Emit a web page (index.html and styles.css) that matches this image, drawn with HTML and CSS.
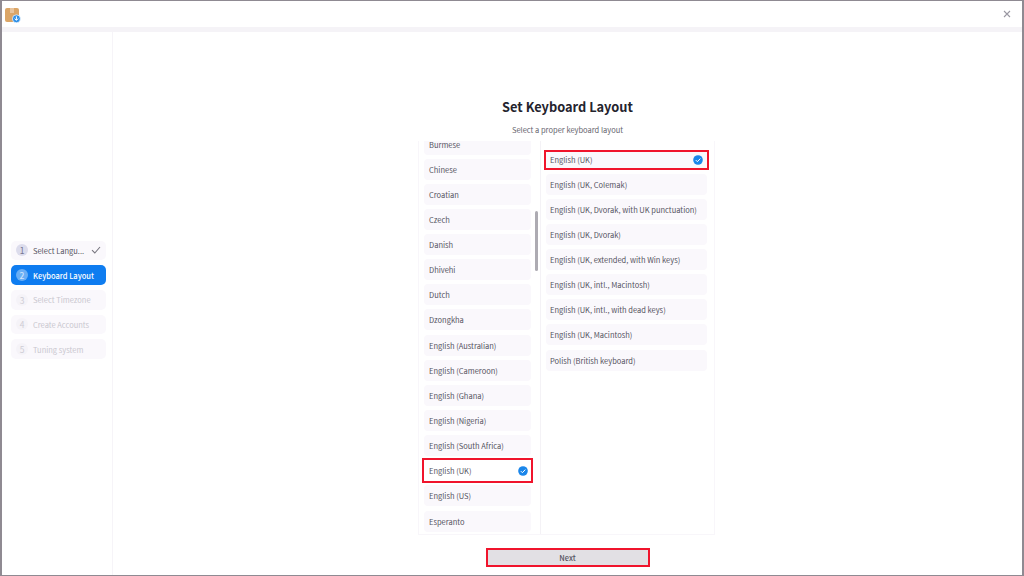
FILE: index.html
```html
<!DOCTYPE html>
<html lang="en">
<head>
<meta charset="utf-8">
<title>Set Keyboard Layout</title>
<link rel="stylesheet" href="styles.css">
</head>
<body>
<div class="window">
  <header class="titlebar">
    <svg class="logo" width="16" height="15" viewBox="0 0 16 15">
      <rect x="0" y="0" width="14" height="14" rx="2" fill="#dba566"/>
      <rect x="5" y="0" width="4" height="5" fill="#e8c49c"/>
      <circle cx="11.4" cy="10.8" r="4" fill="#2e8fe6" stroke="#fff" stroke-width="0.7"/>
      <path d="M11.4 8.4v3.6M9.7 10.6l1.7 1.8 1.7-1.8" fill="none" stroke="#fff" stroke-width="1"/>
    </svg>
    <svg class="close" width="8" height="8" viewBox="0 0 8 8">
      <path d="M1 1l6 6M7 1l-6 6" stroke="#9a98a2" stroke-width="1.1"/>
    </svg>
  </header>
  <div class="band"></div>
  <div class="body">
    <nav class="sidebar">
      <div class="step done"><span class="num">1</span><span class="label">Select Langu...</span>
        <svg class="tick" width="10" height="8" viewBox="0 0 10 8"><path d="M1 4.2l2.8 2.8L9 1" fill="none" stroke="#77757f" stroke-width="1.1"/></svg>
      </div>
      <div class="step active"><span class="num">2</span><span class="label">Keyboard Layout</span></div>
      <div class="step off"><span class="num">3</span><span class="label">Select Timezone</span></div>
      <div class="step off"><span class="num">4</span><span class="label">Create Accounts</span></div>
      <div class="step off"><span class="num">5</span><span class="label">Tuning system</span></div>
    </nav>
    <main class="main">
      <h1 class="title">Set Keyboard Layout</h1>
      <p class="subtitle">Select a proper keyboard layout</p>
      <div class="panes">
        <div class="pane pane-left">
          <div class="scrollbar"></div>
          <ul class="list list-left">
            <li class="item">Burmese</li>
            <li class="item">Chinese</li>
            <li class="item">Croatian</li>
            <li class="item">Czech</li>
            <li class="item">Danish</li>
            <li class="item">Dhivehi</li>
            <li class="item">Dutch</li>
            <li class="item">Dzongkha</li>
            <li class="item">English (Australian)</li>
            <li class="item">English (Cameroon)</li>
            <li class="item">English (Ghana)</li>
            <li class="item">English (Nigeria)</li>
            <li class="item">English (South Africa)</li>
            <li class="item selected">English (UK)
              <svg class="check" width="10" height="10" viewBox="0 0 10 10"><circle cx="5" cy="5" r="4.8" fill="#1a86ea"/><path d="M2.8 5.1l1.6 1.6 2.9-3.1" fill="none" stroke="#fff" stroke-width="1"/></svg>
            </li>
            <li class="item">English (US)</li>
            <li class="item">Esperanto</li>
          </ul>
        </div>
        <div class="pane pane-right">
          <ul class="list list-right">
            <li class="item selected">English (UK)
              <svg class="check" width="10" height="10" viewBox="0 0 10 10"><circle cx="5" cy="5" r="4.8" fill="#1a86ea"/><path d="M2.8 5.1l1.6 1.6 2.9-3.1" fill="none" stroke="#fff" stroke-width="1"/></svg>
            </li>
            <li class="item">English (UK, Colemak)</li>
            <li class="item">English (UK, Dvorak, with UK punctuation)</li>
            <li class="item">English (UK, Dvorak)</li>
            <li class="item">English (UK, extended, with Win keys)</li>
            <li class="item">English (UK, intl., Macintosh)</li>
            <li class="item">English (UK, intl., with dead keys)</li>
            <li class="item">English (UK, Macintosh)</li>
            <li class="item">Polish (British keyboard)</li>
          </ul>
        </div>
      </div>
      <button class="next" type="button">Next</button>
    </main>
  </div>
</div>
</body>
</html>
```
FILE: styles.css
```css
* { box-sizing: border-box; }
html, body { margin: 0; height: 100%; }
body {
  width: 1024px;
  height: 576px;
  overflow: hidden;
  background: #fff;
  font-family: "Noto Sans CJK SC", "Noto Sans", sans-serif;
  color: #55535f;
}
.window {
  display: flex;
  flex-direction: column;
  height: 576px;
  border-style: solid;
  border-color: #8f8a92;
  border-width: 1px 2px 1px 2px;
}
.titlebar {
  display: flex;
  align-items: center;
  justify-content: space-between;
  flex: none;
  height: 26px;
  padding: 0 11px 0 3px;
  background: #fff;
}
.logo { margin-top: 3px; }
.band { flex: none; height: 5px; background: #f5f3f7; }
.body { flex: 1; display: flex; min-height: 0; }
.sidebar {
  flex: none;
  width: 111px;
  display: flex;
  flex-direction: column;
  gap: 5px;
  padding: 208.5px 6px 0 9px;
  border-right: 1px solid #f6f4f8;
}
.step {
  display: flex;
  align-items: center;
  flex: none;
  height: 19.7px;
  padding: 0 5px;
  border-radius: 5px;
  background: #faf8fc;
  font-size: 7.5px;
  color: #55535f;
  white-space: nowrap;
}
.num {
  flex: none;
  display: flex;
  align-items: center;
  justify-content: center;
  width: 12px;
  height: 12px;
  margin-right: 5px;
  border-radius: 50%;
  background: #dcdcec;
  font-size: 8.5px;
  color: #77758f;
}
.label { flex: 1; }
.step.active { background: #0f7df0; color: #fff; font-weight: 500; }
.step.active .num { background: #69aef5; color: #cfe4fb; }
.step.off { color: #c9c7cf; }
.step.off .num { background: #f5f3f8; color: #cfcdd5; }
.main {
  flex: 1;
  min-width: 0;
  display: flex;
  flex-direction: column;
  align-items: center;
  padding-top: 65px;
}
.title {
  margin: 0;
  font-size: 12.8px;
  line-height: 20px;
  font-weight: 700;
  color: #24232d;
}
.subtitle {
  margin: 7px 0 0;
  font-size: 7.5px;
  line-height: 12px;
  color: #66646e;
}
.panes {
  display: flex;
  flex: none;
  height: 394px;
  width: 297px;
  margin-top: 5px;
  margin-left: -2px;
  border: 1px solid #f8f6fa;
  border-top: 0;
}
.pane { position: relative; overflow: hidden; height: 100%; }
.pane-left { flex: none; width: 122px; border-right: 1px solid #f4f2f6; }
.pane-right { flex: 1; }
.list {
  list-style: none;
  margin: 0;
  display: flex;
  flex-direction: column;
  gap: 4.15px;
}
.list-left { padding: 0 9px 0 5px; margin-top: -7.5px; }
.list-right { padding: 10.5px 7px 0 5px; }
.item {
  display: flex;
  align-items: center;
  justify-content: space-between;
  flex: none;
  height: 21px;
  padding: 0 4px;
  border-radius: 4px;
  background: #faf8fc;
  font-size: 7.5px;
  color: #55535f;
  white-space: nowrap;
}
.list-left .item { padding: 0 3px 0 5px; }
.item.selected {
  background: #fff;
  outline: 2px solid #f0142c;
  border-radius: 0;
}
.pane-right .item.selected { background: #faf8fc; height: 16px; margin-bottom: 2px; }
.scrollbar {
  position: absolute;
  top: 70px;
  right: 2px;
  width: 3px;
  height: 60px;
  background: #adabb2;
  border-radius: 2px;
}
.next {
  flex: none;
  width: 160px;
  height: 15px;
  margin-top: 15px;
  border: 0;
  outline: 2px solid #f0142c;
  background: #e2e0e4;
  font-family: inherit;
  font-size: 7.5px;
  font-weight: 500;
  color: #55535f;
}
```
